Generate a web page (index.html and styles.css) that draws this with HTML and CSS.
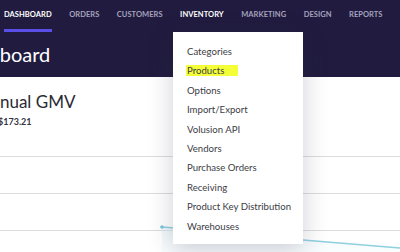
FILE: index.html
```html
<!DOCTYPE html>
<html>
<head>
<meta charset="utf-8">
<link rel="stylesheet" href="styles.css">
</head>
<body>
<div class="page">
  <header class="header">
    <nav class="nav">
      <a class="nav-item active">DASHBOARD</a>
      <a class="nav-item">ORDERS</a>
      <a class="nav-item">CUSTOMERS</a>
      <a class="nav-item open">INVENTORY</a>
      <a class="nav-item">MARKETING</a>
      <a class="nav-item">DESIGN</a>
      <a class="nav-item">REPORTS</a>
    </nav>
    <h1 class="title">Dashboard</h1>
  </header>
  <main class="content">
    <div class="metric">
      <div class="metric-name">Annual GMV</div>
      <div class="metric-value">$173.21</div>
    </div>
    <svg class="chart" width="400" height="112" viewBox="0 0 400 112">
      <defs>
        <linearGradient id="fill" x1="0" y1="0" x2="0" y2="1">
          <stop offset="0" stop-color="#d8f0f6" stop-opacity="0.9"/>
          <stop offset="1" stop-color="#eef8fb" stop-opacity="0.6"/>
        </linearGradient>
      </defs>
      <line x1="0" y1="16.5" x2="400" y2="16.5" stroke="#dcdcdf" stroke-width="1"/>
      <line x1="0" y1="53.5" x2="400" y2="53.5" stroke="#dcdcdf" stroke-width="1"/>
      <line x1="0" y1="90.5" x2="400" y2="90.5" stroke="#dcdcdf" stroke-width="1"/>
      <path d="M162 87 L175 88 L303 100 L400 108 L400 112 L162 112 Z" fill="url(#fill)" opacity="0.5"/>
      <path d="M162 87 L175 88 L303 100 L400 108" fill="none" stroke="#8fd0e0" stroke-width="1.3"/>
      <circle cx="162" cy="87" r="1.8" fill="#7cc4dc"/>
    </svg>
  </main>
  <ul class="dropdown">
    <li class="drop-item">Categories</li>
    <li class="drop-item"><span class="hl">Products</span></li>
    <li class="drop-item">Options</li>
    <li class="drop-item">Import/Export</li>
    <li class="drop-item">Volusion API</li>
    <li class="drop-item">Vendors</li>
    <li class="drop-item">Purchase Orders</li>
    <li class="drop-item">Receiving</li>
    <li class="drop-item">Product Key Distribution</li>
    <li class="drop-item">Warehouses</li>
  </ul>
</div>
</body>
</html>
```
FILE: styles.css
```css
* { box-sizing: border-box; }
html, body { margin: 0; padding: 0; }
body {
  width: 400px;
  height: 252px;
  overflow: hidden;
  background: #ffffff;
  font-family: Lato, "Open Sans", sans-serif;
}
.page {
  position: relative;
  width: 400px;
  height: 252px;
  overflow: hidden;
}
.header {
  background: #211c3f;
  height: 77px;
}
.nav {
  display: flex;
  gap: 17.5px;
  padding-left: 4px;
  height: 32px;
}
.nav-item {
  font-size: 7.5px;
  font-weight: 700;
  letter-spacing: 0.05px;
  color: #a6a3bd;
  padding-top: 11px;
  height: 32px;
  line-height: 8px;
  border-bottom: 3px solid transparent;
  white-space: nowrap;
}
.nav-item.active {
  color: #ffffff;
  border-bottom-color: #5a4ee6;
}
.nav-item.open { color: #ffffff; }
.title {
  margin: 10px 0 0 -45px;
  font-size: 20px;
  font-weight: 400;
  line-height: 24px;
  color: #ffffff;
}
.content {
  background: #ffffff;
}
.metric {
  margin-left: -21px;
  padding-top: 15px;
  height: 63px;
}
.metric-name {
  font-size: 17px;
  line-height: 20px;
  color: #2a2a33;
}
.metric-value {
  margin-top: 4px;
  margin-left: 19px;
  font-size: 9px;
  font-weight: 700;
  color: #333340;
}
.chart { display: block; }
.dropdown {
  position: absolute;
  left: 173px;
  top: 32px;
  width: 130px;
  height: 212px;
  margin: 0;
  padding: 10px 0 0 14px;
  list-style: none;
  background: #ffffff;
  box-shadow: 0 6px 24px rgba(40, 40, 70, 0.22);
}
.drop-item {
  font-size: 9.6px;
  line-height: 19.4px;
  color: #3d3d45;
  white-space: nowrap;
}
.hl {
  background: #f4ff38;
  padding: 0 14px 0 1px;
  margin-left: -1px;
}
```
